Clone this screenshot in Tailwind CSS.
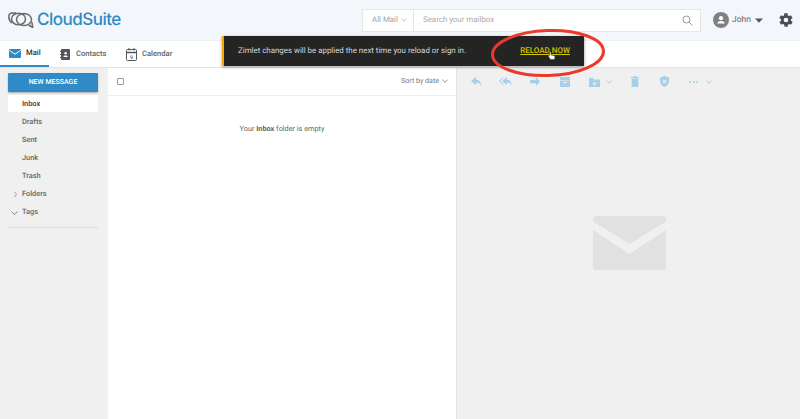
<!DOCTYPE html>
<html lang="en">
  <head>
    <meta charset="UTF-8" />
    <meta name="viewport" content="width=device-width, initial-scale=1.0" />
    <title>CloudSuite Mail</title>
    <script src="https://cdn.jsdelivr.net/npm/@tailwindcss/browser@4"></script>
  </head>
  <body class="w-[800px] h-[419px] overflow-hidden bg-[#f0f0f0] font-['Roboto',sans-serif] relative [text-rendering:geometricPrecision]">
    <!-- Header -->
    <header class="h-[40px] bg-[#f3f6fa] flex items-center">
      <div class="flex items-center pl-[8px] w-[362px]">
        <svg width="26" height="16" viewBox="0 0 26 16" fill="none" stroke="#6b6b6b" stroke-width="1.5">
          <path d="M8 1H4C2 1 .8 2.500.8 4.500c0 2.500 1.200 5 3.200 6.500" />
          <ellipse cx="10.500" cy="7" rx="7" ry="5.800" />
          <ellipse cx="16" cy="7.500" rx="7.500" ry="6" />
          <path d="M20.500 13l4.300 2.500-1-5.500" />
        </svg>
        <span class="ml-[3px] text-[#2f8ac6] text-[17px] leading-none font-medium font-['Inter',sans-serif] tracking-[-0.5px]">CloudSuite</span>
      </div>
      <div class="w-[339px] h-[23px] bg-white border border-[#e6e6e6] flex items-center text-[7.900px] text-[#a3a3a3]">
        <div class="w-[51px] h-full border-r border-[#e6e6e6] flex items-center pl-[9px] gap-[3px]">
          All Mail
          <svg width="6" height="4" viewBox="0 0 6 4" fill="none" stroke="#a3a3a3" stroke-width=".7"><path d="M.4.6 3 3.300 5.600.6" /></svg>
        </div>
        <span class="pl-[9px] flex-1 text-[#ababab]">Search your mailbox</span>
        <svg class="mr-[7px]" width="11" height="11" viewBox="0 0 11 11" fill="none" stroke="#999" stroke-width="1"><circle cx="4.500" cy="4.500" r="3.500" /><path d="M7 7l3.500 3.500" /></svg>
      </div>
      <div class="ml-[12px] flex items-center">
        <svg width="16" height="16" viewBox="0 0 16 16"><circle cx="8" cy="8" r="8" fill="#808080" /><circle cx="8" cy="6.200" r="2.100" fill="#fff" /><path d="M4.200 11.600c0-1.800 2.400-2.600 3.800-2.600s3.800.8 3.800 2.600z" fill="#fff" /></svg>
        <span class="ml-[3px] text-[8.500px] text-[#666]">John</span>
        <svg class="ml-[4px]" width="8" height="5" viewBox="0 0 8 5"><path d="M0 .5h8L4 4.800z" fill="#555" /></svg>
      </div>
      <svg class="ml-[15px]" width="16" height="16" viewBox="0 0 24 24" fill="#4a4f55"><path d="M19.400 13c.1-.3.1-.7.1-1s0-.7-.1-1l2.100-1.600c.2-.2.2-.4.1-.6l-2-3.500c-.1-.2-.4-.3-.6-.2l-2.500 1c-.5-.4-1.100-.7-1.700-1l-.4-2.600c0-.3-.2-.5-.5-.5h-4c-.3 0-.5.2-.5.4l-.4 2.700c-.6.2-1.200.6-1.700 1l-2.500-1c-.2-.1-.5 0-.6.2l-2 3.500c-.1.2-.1.5.1.6L4.600 11c0 .3-.1.7-.1 1s0 .7.1 1l-2.100 1.600c-.2.2-.2.4-.1.6l2 3.500c.1.2.4.3.6.2l2.500-1c.5.4 1.100.7 1.700 1l.4 2.600c0 .3.2.5.5.5h4c.3 0 .5-.2.5-.4l.4-2.700c.6-.2 1.200-.6 1.700-1l2.500 1c.2.1.5 0 .6-.2l2-3.500c.1-.2.1-.5-.1-.6zM12 15.500a3.500 3.500 0 1 1 0-7 3.500 3.500 0 0 1 0 7z" /></svg>
    </header>

    <!-- Tabs -->
    <nav class="mt-[1px] h-[27px] bg-white border-b border-[#e4e4e4] flex text-[7.600px] font-medium">
      <div class="w-[49px] h-[26px] border-b-2 border-[#2f8ac6] flex items-center pl-[9px] text-[#333]">
        <svg width="12" height="9" viewBox="0 0 12 9"><rect width="12" height="9" rx="1" fill="#2f8ac6" /><path d="M.5 1.500 6 5.200l5.500-3.700" fill="none" stroke="#fff" stroke-width="1" /></svg>
        <span class="ml-[5px]">Mail</span>
      </div>
      <div class="flex items-center ml-[11px] w-[66px] text-[#666]">
        <svg width="10" height="11" viewBox="0 0 10 11"><rect x="1" width="9" height="11" rx="1" fill="#555" /><path d="M0 2.500h2M0 5.500h2M0 8.500h2" stroke="#555" /><circle cx="5.600" cy="4.300" r="1.300" fill="#fff" /><path d="M3.400 8c0-1.200 1.300-1.600 2.200-1.600s2.200.4 2.200 1.600z" fill="#fff" /></svg>
        <span class="ml-[6px]">Contacts</span>
      </div>
      <div class="flex items-center text-[#666]">
        <svg width="11" height="13" viewBox="0 0 11 13" fill="none" stroke="#555"><rect x=".5" y="1.500" width="10" height="11" rx="1" /><path d="M.5 4.500h10" stroke-width="1.500" /><path d="M3 0v2.500M8 0v2.500" /><text x="5.500" y="10.500" font-size="5" text-anchor="middle" fill="#555" stroke="none">9</text></svg>
        <span class="ml-[5px]">Calendar</span>
      </div>
    </nav>

    <div class="flex h-[351px]">
      <!-- Sidebar -->
      <aside class="w-[108px] shrink-0 pl-[8px] pt-[5px] text-[7.400px] font-medium text-[#666]">
        <div class="w-[90px] h-[19px] bg-[#2f8ac6] rounded-[1px] shadow-[0_1px_2px_rgba(0,0,0,.3)] flex items-center justify-center text-white text-[7px]">NEW MESSAGE</div>
        <div class="w-[90px] h-[17px] mt-[3px] mb-[1px] bg-white flex items-center pl-[14px] text-[#333]">Inbox</div>
        <div class="h-[18px] flex items-center pl-[14px]">Drafts</div>
        <div class="h-[18px] flex items-center pl-[14px]">Sent</div>
        <div class="h-[18px] flex items-center pl-[14px]">Junk</div>
        <div class="h-[18px] flex items-center pl-[14px]">Trash</div>
        <div class="h-[18px] flex items-center">
          <svg class="ml-[6px] mr-[5px]" width="3" height="7" viewBox="0 0 4 8" fill="none" stroke="#777"><path d="M.5.5 3.500 4 .5 7.500" /></svg>Folders
        </div>
        <div class="h-[18px] flex items-center">
          <svg class="ml-[3px] mr-[4px] mt-[2px]" width="7" height="4" viewBox="0 0 8 4.500" fill="none" stroke="#777"><path d="M.5.5 4 4 7.500.5" /></svg>Tags
        </div>
        <div class="w-[90px] border-t border-[#dcdcdc] mt-[6px]"></div>
      </aside>

      <!-- Message list -->
      <section class="w-[349px] shrink-0 bg-white border-r border-[#e4e4e4]">
        <div class="h-[28px] border-b border-[#efefef] flex items-center justify-between pl-[9px] pr-[8px]">
          <span class="w-[7px] h-[7px] border border-[#999] rounded-[1px]"></span>
          <span class="flex items-center gap-[3px] text-[7.100px] text-[#777]">Sort by date
            <svg width="6" height="4" viewBox="0 0 6 4" fill="none" stroke="#777" stroke-width=".8"><path d="M.4.6 3 3.300 5.600.6" /></svg>
          </span>
        </div>
        <p class="mt-[28px] text-center text-[7.300px] text-[#666]">Your <b class="font-bold">Inbox</b> folder is empty</p>
      </section>

      <!-- Reading pane -->
      <section class="flex-1 min-w-0">
        <div class="h-[27px] flex items-center pl-[14px] text-[#a4d0e9]">
          <svg class="w-[11px]" height="10" viewBox="0 0 13 11" fill="currentColor" preserveAspectRatio="none"><path d="M6 0 0 4.500 6 9V6c3 0 5 1 6.500 4C12 6 10 3 6 3z" /></svg>
          <svg class="ml-[17px] w-[14px]" height="10" viewBox="0 0 17 11" fill="currentColor" preserveAspectRatio="none"><path d="M9.500 0 4 4.500 9.500 9V6c3 0 5 1 6.500 4-.5-4-2.500-7-6.500-7z" /><path d="M5.500 0 0 4.500 5.500 9V7.700L1.800 4.500 5.500 1.300z" /></svg>
          <svg class="ml-[17px] w-[10px]" height="9" viewBox="0 0 12 10" fill="currentColor" preserveAspectRatio="none"><path d="M7 0l5 5-5 5V7H0V3h7z" /></svg>
          <svg class="ml-[20px] w-[10px]" height="10" viewBox="0 0 10 10" fill="currentColor"><path d="M0 0h10v3H0zM0 3.500h10V10H0zM3 5v1h4V5z" fill-rule="evenodd" /></svg>
          <svg class="ml-[19px] w-[11px]" height="10" viewBox="0 0 11 10" fill="currentColor"><path d="M0 1h4l1 1.500h6V10H0zM5 5v1.200H3.800v1H5v1.200h1V7.200h1.200v-1H6V5z" fill-rule="evenodd" /></svg>
          <svg class="ml-[6px]" width="6" height="4" viewBox="0 0 6 4" fill="none" stroke="#b8b8b8" stroke-width=".8"><path d="M.4.6 3 3.300 5.600.6" /></svg>
          <svg class="ml-[19px] w-[8px]" height="11" viewBox="0 0 8 11" fill="currentColor"><path d="M0 1h2.500V0h3v1H8v1.500H0zM.7 3h6.600v8H.7z" /></svg>
          <svg class="ml-[21px] w-[9px]" height="11" viewBox="0 0 10 11" fill="currentColor" preserveAspectRatio="none"><path d="M5 0l5 1.500V5c0 3-2 5-5 6-3-1-5-3-5-6V1.500zM3.300 3.500l-.7.700L4.300 5.500 2.600 7l.7.700L5 6.200l1.700 1.500.7-.7L5.700 5.500l1.700-1.300-.7-.7L5 4.800z" fill-rule="evenodd" /></svg>
          <span class="ml-[20px] flex gap-[1.500px]"><i class="w-[2px] h-[2px] rounded-full bg-current"></i><i class="w-[2px] h-[2px] rounded-full bg-current"></i><i class="w-[2px] h-[2px] rounded-full bg-current"></i></span>
          <svg class="ml-[8px]" width="6" height="4" viewBox="0 0 6 4" fill="none" stroke="#b8b8b8" stroke-width=".8"><path d="M.4.6 3 3.300 5.600.6" /></svg>
        </div>
        <div class="flex justify-center pt-[121px] pl-[2px]">
          <svg width="73" height="54" viewBox="0 0 73 54" fill="#e1e1e1"><path d="M3 0h67a3 3 0 0 1 3 3v2.500L36.500 28 0 5.500V3a3 3 0 0 1 3-3z" /><path d="M0 14l36.500 24L73 14v37a3 3 0 0 1-3 3H3a3 3 0 0 1-3-3z" /></svg>
        </div>
      </section>
    </div>

    <!-- Toast -->
    <div class="absolute left-[222px] top-[36px] w-[362px] h-[30px] bg-[#242424] border-l-2 border-[#f5a800] shadow-[0_1px_3px_rgba(0,0,0,.4)] flex items-center justify-between pl-[14px] pr-[14px] text-[7.900px] text-[#d8d8d8]">
      <span>Zimlet changes will be applied the next time you reload or sign in.</span>
      <span class="text-[#d4c400] underline font-medium text-[8px]">RELOAD NOW</span>
    </div>

    <!-- Annotation ring and cursor -->
    <svg class="absolute left-[485px] top-[25px]" width="125" height="56" viewBox="0 0 125 56" fill="none">
      <ellipse cx="63" cy="28" rx="55.500" ry="22.500" stroke="#ea3a2e" stroke-width="3" transform="rotate(-2 63 28)" />
      <path d="M64.500 27.500c0-1 1.500-1 1.500 0v2.500l3 .5c.8.2 1 .7 1 1.300l-.5 2.700h-4l-2-3c-.5-1 .5-1.500 1-.8z" fill="#fff" stroke="#444" stroke-width=".6" />
    </svg>
  </body>
</html>
